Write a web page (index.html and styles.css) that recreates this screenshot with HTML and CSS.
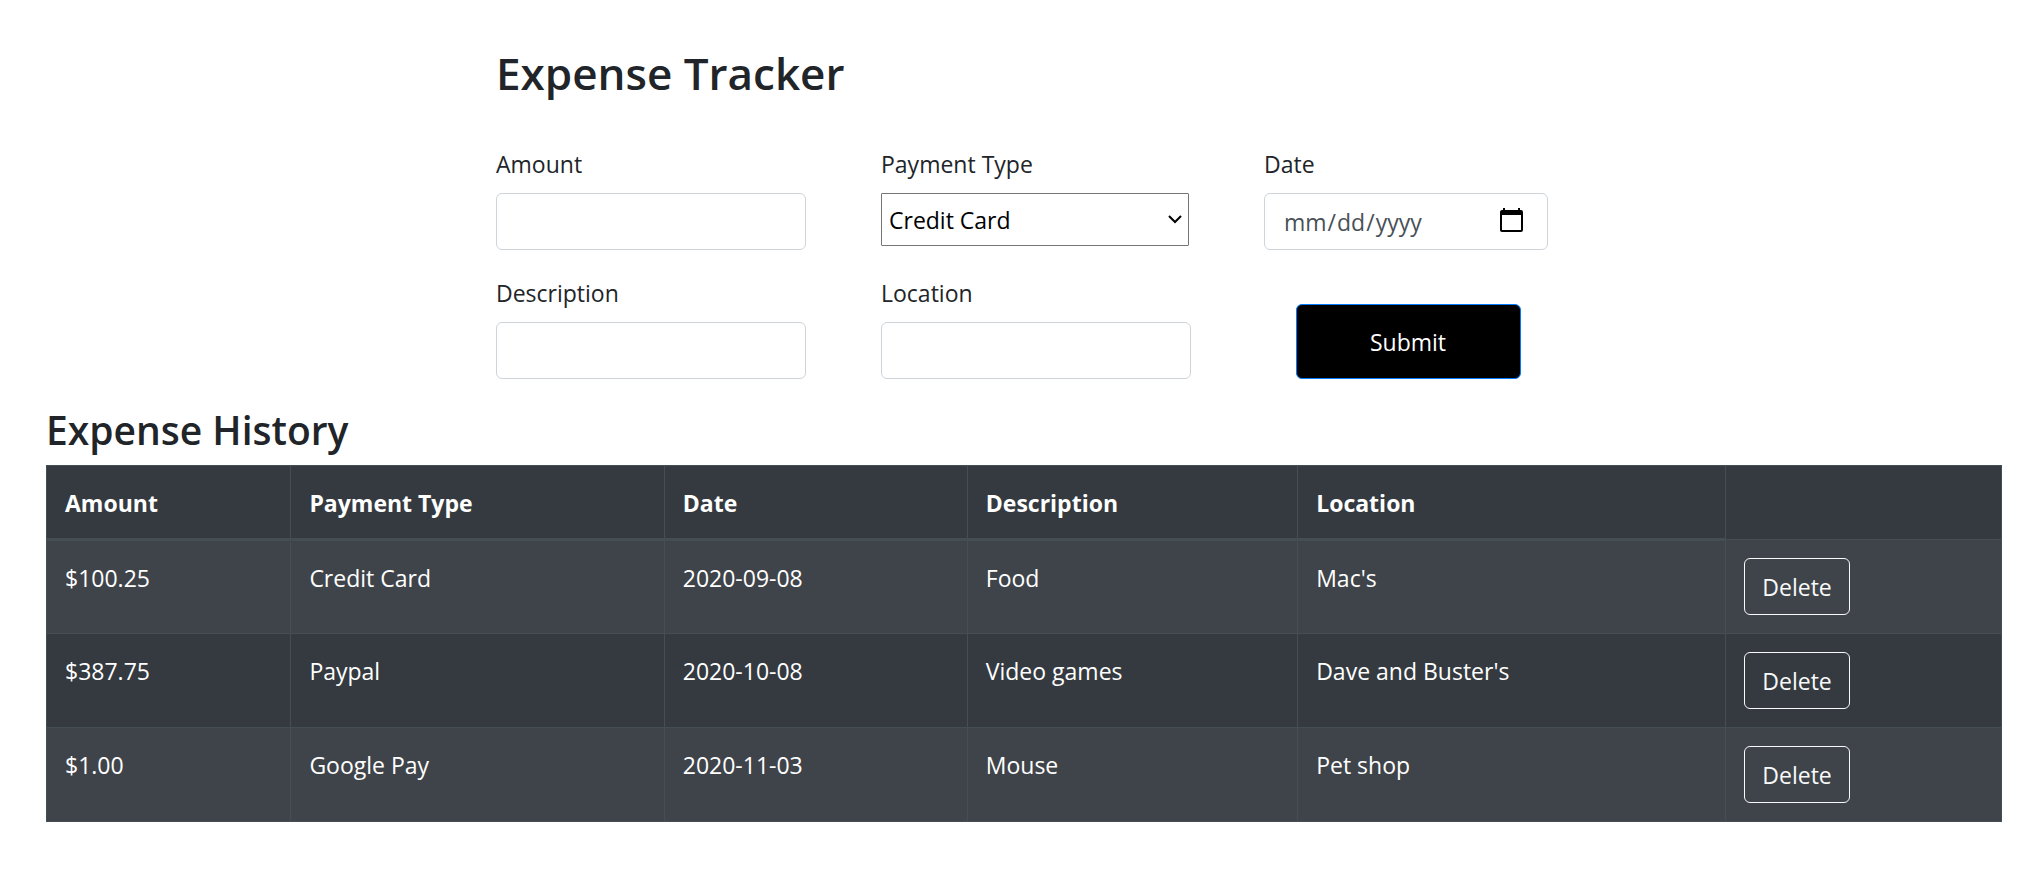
FILE: index.html
```html
<!DOCTYPE html>
<html lang="en">
<head>
<meta charset="utf-8">
<meta name="viewport" content="width=device-width, initial-scale=1">
<title>Expense Tracker</title>
<link rel="stylesheet" href="styles.css">
</head>
<body>
<main class="page">
  <section class="tracker">
    <h1 class="tracker-title">Expense Tracker</h1>
    <form class="expense-form">
      <div class="field">
        <label for="amount">Amount</label>
        <input class="control" id="amount" type="text">
      </div>
      <div class="field">
        <label for="type">Payment Type</label>
        <select class="picker" id="type">
          <option>Credit Card</option>
          <option>Paypal</option>
          <option>Google Pay</option>
        </select>
      </div>
      <div class="field">
        <label for="date">Date</label>
        <input class="control control-date" id="date" type="date">
      </div>
      <div class="field">
        <label for="description">Description</label>
        <input class="control" id="description" type="text">
      </div>
      <div class="field">
        <label for="location">Location</label>
        <input class="control" id="location" type="text">
      </div>
      <button class="submit" type="submit">Submit</button>
    </form>
  </section>
  <section class="history">
    <h2 class="history-title">Expense History</h2>
    <table class="history-table">
      <colgroup>
        <col class="col-amount"><col class="col-type"><col class="col-date">
        <col class="col-description"><col class="col-location"><col class="col-action">
      </colgroup>
      <thead>
        <tr><th>Amount</th><th>Payment Type</th><th>Date</th><th>Description</th><th>Location</th><td></td></tr>
      </thead>
      <tbody>
        <tr><td>$100.25</td><td>Credit Card</td><td>2020-09-08</td><td>Food</td><td>Mac's</td><td><button class="delete" type="button">Delete</button></td></tr>
        <tr><td>$387.75</td><td>Paypal</td><td>2020-10-08</td><td>Video games</td><td>Dave and Buster's</td><td><button class="delete" type="button">Delete</button></td></tr>
        <tr><td>$1.00</td><td>Google Pay</td><td>2020-11-03</td><td>Mouse</td><td>Pet shop</td><td><button class="delete" type="button">Delete</button></td></tr>
      </tbody>
    </table>
  </section>
</main>
</body>
</html>
```
FILE: styles.css
```css
*, *::before, *::after { box-sizing: border-box; }

body {
  margin: 0;
  background: #fff;
  color: #212529;
  font-family: "Open Sans", "Noto Sans", sans-serif;
  font-size: 23px;
  line-height: 36px;
}

input, select, button { font: inherit; }

.page { padding: 45px 31px 45px 46px; }

.tracker { width: fit-content; margin: 0 auto; }

h1, h2 { margin: 0; font-weight: 600; }

.tracker-title { font-size: 44px; line-height: 56px; }

.expense-form {
  display: grid;
  grid-template-columns: 310px 308px 288px;
  gap: 25px 75px;
  margin-top: 45px;
}

.field { display: flex; flex-direction: column; align-items: flex-start; gap: 11px; }

.control {
  width: 310px;
  height: 57px;
  padding: 9px 18px;
  border: 1px solid #ced4da;
  border-radius: 6px;
  background: #fff;
  color: #495057;
}

.control-date { width: 284px; }

.control-date::-webkit-calendar-picker-indicator {
  width: 36px;
  height: 28px;
  margin: 0;
  padding: 0;
  background: url("data:image/svg+xml,%3Csvg xmlns='http://www.w3.org/2000/svg' viewBox='0 0 23 24'%3E%3Cpath fill-rule='evenodd' d='M3 0h2v2h13V0h2v2h1a2 2 0 0 1 2 2v18a2 2 0 0 1-2 2H2a2 2 0 0 1-2-2V4a2 2 0 0 1 2-2h1zM2 7v15h19V7z'/%3E%3C/svg%3E") center top / 23px 24px no-repeat;
}

.picker {
  appearance: none;
  width: 308px;
  height: 53px;
  padding: 0 30px 0 7px;
  border: 1px solid #767676;
  border-radius: 1px;
  background: #fff url("data:image/svg+xml,%3Csvg xmlns='http://www.w3.org/2000/svg' viewBox='0 0 14 9'%3E%3Cpath d='M1 1l6 6 6-6' fill='none' stroke='%23000' stroke-width='2'/%3E%3C/svg%3E") right 6px center / 14px 9px no-repeat;
  color: #000;
}

.submit {
  width: 225px;
  height: 75px;
  place-self: end center;
  border: 1px solid #007bff;
  border-radius: 6px;
  background: #000;
  color: #fff;
}

.history { margin-top: 27px; }

.history-title { font-size: 39px; line-height: 48px; margin-bottom: 11px; }

.history-table {
  width: 100%;
  table-layout: fixed;
  border-collapse: collapse;
  background: #343a40;
  color: #fff;
  line-height: 38px;
  border: 1px solid #454d55;
}

.history-table th, .history-table td {
  padding: 18px;
  border: 1px solid #454d55;
  text-align: left;
  vertical-align: top;
}

.history-table th { padding-bottom: 16px; font-weight: 700; border-bottom-width: 3px; }

.history-table tbody tr:nth-child(odd) { background: #3f444a; }

.col-amount { width: 12.5%; }
.col-type { width: 19.1%; }
.col-date { width: 15.5%; }
.col-description { width: 16.9%; }
.col-location { width: 21.9%; }

.delete {
  display: block;
  height: 57px;
  padding: 9px 17px;
  border: 1px solid #f8f9fa;
  border-radius: 6px;
  background: transparent;
  color: #f8f9fa;
}
```
